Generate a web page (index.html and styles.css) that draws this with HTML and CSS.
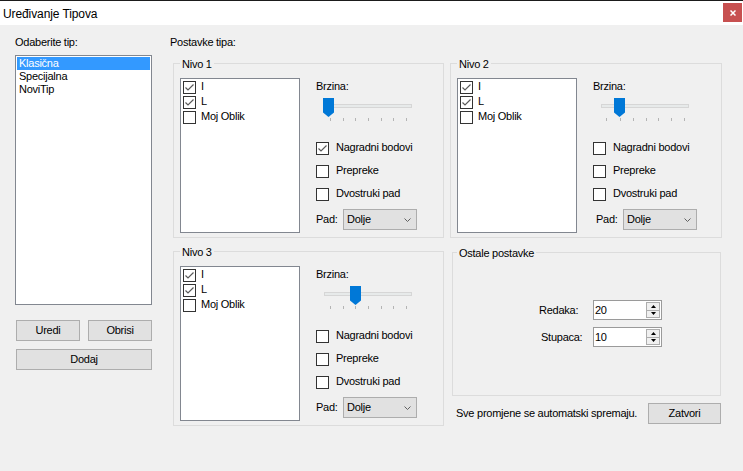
FILE: index.html
```html
<!DOCTYPE html>
<html>
<head>
<meta charset="utf-8">
<link rel="stylesheet" href="styles.css">
</head>
<body>
<div class="titlebar">
  <span class="title">Uređivanje Tipova</span>
  <div class="close"><svg width="6" height="6" viewBox="0 0 6 6"><path d="M0.5 0.5L5.5 5.5M5.5 0.5L0.5 5.5" stroke="#fff" stroke-width="1.5"/></svg></div>
</div>
<div class="main">
  <div class="left">
    <div class="lbl">Odaberite tip:</div>
    <div class="listbox">
      <div class="li sel">Klasična</div>
      <div class="li">Specijalna</div>
      <div class="li">NoviTip</div>
    </div>
    <div class="btnrow"><button class="btn w64">Uredi</button><button class="btn w64">Obrisi</button></div>
    <button class="btn wide">Dodaj</button>
  </div>
  <div class="right">
    <div class="lbl">Postavke tipa:</div>
    <div class="grid">
      <!-- Nivo 1 -->
      <div class="group">
        <div class="legend">Nivo 1</div>
        <div class="gbody">
          <div class="clb">
            <div class="ci"><span class="cb"><svg width="11" height="11" viewBox="0 0 11 11"><polyline points="1.5,5.5 4,8 9.5,2.5" fill="none" stroke="#5a5a5a" stroke-width="1.2"/></svg></span><span class="t">I</span></div>
            <div class="ci"><span class="cb"><svg width="11" height="11" viewBox="0 0 11 11"><polyline points="1.5,5.5 4,8 9.5,2.5" fill="none" stroke="#5a5a5a" stroke-width="1.2"/></svg></span><span class="t">L</span></div>
            <div class="ci"><span class="cb"></span><span class="t">Moj Oblik</span></div>
          </div>
          <div class="ctrl">
            <div class="brz">Brzina:</div>
            <svg class="slider" width="100" height="28" viewBox="0 0 100 28">
              <rect x="8" y="8" width="88" height="4" fill="#d6d6d6"/><rect x="9" y="9" width="86" height="2" fill="#e7eaea"/>
              <g fill="#b4b4b4"><rect x="14" y="22" width="1" height="3"/><rect x="27" y="22" width="1" height="3"/><rect x="39" y="22" width="1" height="3"/><rect x="52" y="22" width="1" height="3"/><rect x="65" y="22" width="1" height="3"/><rect x="77" y="22" width="1" height="3"/><rect x="90" y="22" width="1" height="3"/></g>
              <path transform="translate(7 2)" d="M0 0H11V14.5L5.5 19L0 14.5Z" fill="#0078d7"/>
            </svg>
            <div class="chk first"><span class="cb"><svg width="11" height="11" viewBox="0 0 11 11"><polyline points="1.5,5.5 4,8 9.5,2.5" fill="none" stroke="#5a5a5a" stroke-width="1.2"/></svg></span><span class="t">Nagradni bodovi</span></div>
            <div class="chk"><span class="cb"></span><span class="t">Prepreke</span></div>
            <div class="chk"><span class="cb"></span><span class="t">Dvostruki pad</span></div>
            <div class="padrow"><span class="padl">Pad:</span><div class="combo"><span>Dolje</span><svg width="7" height="4" viewBox="0 0 7 4"><polyline points="0.5,0.5 3.5,3.5 6.5,0.5" fill="none" stroke="#606060"/></svg></div></div>
          </div>
        </div>
      </div>
      <!-- Nivo 2 -->
      <div class="group">
        <div class="legend">Nivo 2</div>
        <div class="gbody">
          <div class="clb">
            <div class="ci"><span class="cb"><svg width="11" height="11" viewBox="0 0 11 11"><polyline points="1.5,5.5 4,8 9.5,2.5" fill="none" stroke="#5a5a5a" stroke-width="1.2"/></svg></span><span class="t">I</span></div>
            <div class="ci"><span class="cb"><svg width="11" height="11" viewBox="0 0 11 11"><polyline points="1.5,5.5 4,8 9.5,2.5" fill="none" stroke="#5a5a5a" stroke-width="1.2"/></svg></span><span class="t">L</span></div>
            <div class="ci"><span class="cb"></span><span class="t">Moj Oblik</span></div>
          </div>
          <div class="ctrl">
            <div class="brz">Brzina:</div>
            <svg class="slider" width="100" height="28" viewBox="0 0 100 28">
              <rect x="8" y="8" width="88" height="4" fill="#d6d6d6"/><rect x="9" y="9" width="86" height="2" fill="#e7eaea"/>
              <g fill="#b4b4b4"><rect x="13" y="22" width="1" height="3"/><rect x="27" y="22" width="1" height="3"/><rect x="40" y="22" width="1" height="3"/><rect x="53" y="22" width="1" height="3"/><rect x="65" y="22" width="1" height="3"/><rect x="78" y="22" width="1" height="3"/><rect x="91" y="22" width="1" height="3"/></g>
              <path transform="translate(21 2)" d="M0 0H11V14.5L5.5 19L0 14.5Z" fill="#0078d7"/>
            </svg>
            <div class="chk first"><span class="cb"></span><span class="t">Nagradni bodovi</span></div>
            <div class="chk"><span class="cb"></span><span class="t">Prepreke</span></div>
            <div class="chk"><span class="cb"></span><span class="t">Dvostruki pad</span></div>
            <div class="padrow shift"><span class="padl">Pad:</span><div class="combo"><span>Dolje</span><svg width="7" height="4" viewBox="0 0 7 4"><polyline points="0.5,0.5 3.5,3.5 6.5,0.5" fill="none" stroke="#606060"/></svg></div></div>
          </div>
        </div>
      </div>
      <!-- Nivo 3 -->
      <div class="group">
        <div class="legend">Nivo 3</div>
        <div class="gbody">
          <div class="clb">
            <div class="ci"><span class="cb"><svg width="11" height="11" viewBox="0 0 11 11"><polyline points="1.5,5.5 4,8 9.5,2.5" fill="none" stroke="#5a5a5a" stroke-width="1.2"/></svg></span><span class="t">I</span></div>
            <div class="ci"><span class="cb"><svg width="11" height="11" viewBox="0 0 11 11"><polyline points="1.5,5.5 4,8 9.5,2.5" fill="none" stroke="#5a5a5a" stroke-width="1.2"/></svg></span><span class="t">L</span></div>
            <div class="ci"><span class="cb"></span><span class="t">Moj Oblik</span></div>
          </div>
          <div class="ctrl">
            <div class="brz">Brzina:</div>
            <svg class="slider" width="100" height="28" viewBox="0 0 100 28">
              <rect x="8" y="8" width="88" height="4" fill="#d6d6d6"/><rect x="9" y="9" width="86" height="2" fill="#e7eaea"/>
              <g fill="#b4b4b4"><rect x="14" y="22" width="1" height="3"/><rect x="27" y="22" width="1" height="3"/><rect x="39" y="22" width="1" height="3"/><rect x="52" y="22" width="1" height="3"/><rect x="65" y="22" width="1" height="3"/><rect x="77" y="22" width="1" height="3"/><rect x="90" y="22" width="1" height="3"/></g>
              <path transform="translate(34 2)" d="M0 0H11V14.5L5.5 19L0 14.5Z" fill="#0078d7"/>
            </svg>
            <div class="chk first"><span class="cb"></span><span class="t">Nagradni bodovi</span></div>
            <div class="chk"><span class="cb"></span><span class="t">Prepreke</span></div>
            <div class="chk"><span class="cb"></span><span class="t">Dvostruki pad</span></div>
            <div class="padrow"><span class="padl">Pad:</span><div class="combo"><span>Dolje</span><svg width="7" height="4" viewBox="0 0 7 4"><polyline points="0.5,0.5 3.5,3.5 6.5,0.5" fill="none" stroke="#606060"/></svg></div></div>
          </div>
        </div>
      </div>
      <!-- Ostale + footer -->
      <div class="cell">
        <div class="group ostale">
          <div class="legend lo">Ostale postavke</div>
          <div class="numrow first"><span class="nl">Redaka:</span><div class="num"><span class="nv">20</span><div class="spin"><div class="sb"><svg width="5" height="3" viewBox="0 0 5 3"><polygon points="2.5,0 5,3 0,3" fill="#000"/></svg></div><div class="sb low"><svg width="5" height="3" viewBox="0 0 5 3"><polygon points="0,0 5,0 2.5,3" fill="#000"/></svg></div></div></div></div>
          <div class="numrow"><span class="nl nl2">Stupaca:</span><div class="num"><span class="nv">10</span><div class="spin"><div class="sb"><svg width="5" height="3" viewBox="0 0 5 3"><polygon points="2.5,0 5,3 0,3" fill="#000"/></svg></div><div class="sb low"><svg width="5" height="3" viewBox="0 0 5 3"><polygon points="0,0 5,0 2.5,3" fill="#000"/></svg></div></div></div></div>
        </div>
        <div class="foot"><span>Sve promjene se automatski spremaju.</span><button class="btn zat">Zatvori</button></div>
      </div>
    </div>
  </div>
</div>
</body>
</html>
```
FILE: styles.css
```css
* { box-sizing: border-box; }
body {
  margin: 0;
  width: 743px;
  height: 471px;
  overflow: hidden;
  background: #f0f0f0;
  font-family: "Liberation Sans", Arial, sans-serif;
  font-size: 11px;
  line-height: 13px;
  letter-spacing: -0.25px;
  color: #000;
}
.titlebar {
  height: 25px;
  border-top: 1px solid #1b1b1b;
  background: #fff;
  display: flex;
  justify-content: space-between;
  align-items: flex-start;
}
.title { font-size: 12px; line-height: 16px; padding: 5px 0 0 3px; letter-spacing: -0.1px; }
.close {
  width: 19px; height: 19px;
  margin: 2px 1px 0 0;
  background: #c75050;
  display: flex; align-items: center; justify-content: center;
}
.close svg { display: block; }
.main { display: flex; }
.left { width: 152px; padding: 11px 0 0 15px; flex: none; }
.lbl { height: 13px; }
.listbox {
  margin-top: 6px;
  width: 137px; height: 250px;
  border: 1px solid #828790;
  background: #fff;
  padding: 1px 1px 1px 1px;
}
.li { height: 13px; padding-left: 2px; }
.li.sel { background: #3399ff; color: #fff; }
.btn {
  height: 21px;
  background: #e1e1e1;
  border: 1px solid #adadad;
  font: inherit;
  letter-spacing: inherit;
  color: #000;
  padding: 0;
  margin: 0;
}
.btnrow { display: flex; gap: 8px; margin-top: 15px; padding-left: 1px; }
.w64 { width: 64px; }
.wide { display: block; width: 136px; margin: 8px 0 0 1px; }
.right { margin-left: 18px; padding-top: 11px; }
.grid {
  display: grid;
  grid-template-columns: 271px 272px;
  column-gap: 6px;
  row-gap: 13px;
  margin: 14px 0 0 3px;
}
.group { border: 1px solid #dcdcdc; height: 175px; }
.legend {
  width: fit-content;
  height: 13px;
  margin: -6px 0 0 6px;
  padding: 0 2px;
  background: #f0f0f0;
}
.legend.lo { margin-left: 4px; }
.gbody { display: flex; margin-top: 7px; padding-left: 6px; }
.clb {
  width: 120px; height: 155px;
  flex: none;
  border: 1px solid #828790;
  background: #fff;
  padding: 1px 0 0 2px;
}
.ci { height: 15px; display: flex; }
.cb {
  width: 13px; height: 13px;
  flex: none;
  border: 1px solid #333;
  background: #fff;
  display: flex; align-items: center; justify-content: center;
}
.ci .cb { margin-top: 1px; }
.cb svg { display: block; }
.ci .t { margin-left: 5px; }
.ctrl { margin-left: 16px; }
.brz { margin-top: 2px; height: 13px; }
.slider { display: block; margin-top: 3px; }
.chk { display: flex; height: 13px; margin-top: 10px; }
.chk.first { margin-top: 18px; }
.chk .t { margin-left: 7px; margin-top: -1px; }
.padrow { display: flex; align-items: center; margin-top: 8px; }
.padrow.shift { margin-left: 3px; }
.padl { width: 27px; }
.combo {
  width: 74px; height: 21px;
  background: #e1e1e1;
  border: 1px solid #adadad;
  display: flex; align-items: center; justify-content: space-between;
  padding: 0 5px 0 3px;
}
.combo svg { display: block; }
.cell { display: flex; flex-direction: column; }
.group.ostale { margin: 1px 0 0 2px; width: 269px; height: 144px; }
.numrow { display: flex; align-items: center; height: 20px; margin-top: 7px; }
.numrow.first { margin-top: 40px; }
.nl { width: 140px; padding-left: 86px; }
.nl.nl2 { padding-left: 88px; }
.num {
  width: 69px; height: 20px;
  border: 1px solid #9a9a9a;
  background: #fff;
  display: flex;
}
.nv { flex: 1; padding-left: 1px; line-height: 18px; }
.spin {
  width: 14px;
  margin: 1px 1px 1px 0;
  border: 1px solid #adadad;
  background: #f0f0f0;
  display: flex; flex-direction: column;
}
.sb { flex: 1; display: flex; align-items: center; justify-content: center; }
.sb.low { border-top: 1px solid #adadad; }
.sb svg { display: block; }
.foot {
  display: flex; align-items: center; justify-content: space-between;
  margin-top: 7px; padding: 0 1px 0 6px;
}
.zat { width: 73px; }
```
